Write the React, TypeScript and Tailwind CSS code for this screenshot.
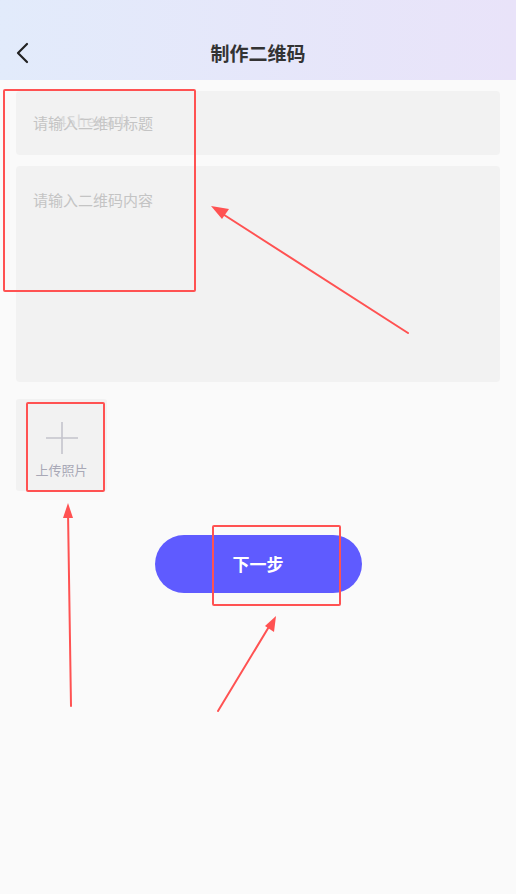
import React from "react";

export default function App() {
  const font = { fontFamily: '"Noto Sans CJK SC", "Noto Sans", sans-serif' };
  return (
    <div className="relative w-[516px] h-[894px] bg-[#fafafa] overflow-hidden" style={font}>
      {/* Header */}
      <div className="h-[80px] bg-gradient-to-r from-[#e2ebfb] to-[#e9e3f9] flex flex-col">
        <div className="mt-[33px] h-[40px] flex items-center relative">
          <svg className="ml-[14px]" width="16" height="24" viewBox="0 0 16 24" fill="none">
            <path d="M13 3 L4 12 L13 21" stroke="#222" strokeWidth="2.2" strokeLinecap="round" strokeLinejoin="round" />
          </svg>
          <div className="absolute left-0 right-0 text-center text-[19px] font-bold text-[#333] pointer-events-none">制作二维码</div>
        </div>
      </div>

      {/* Body */}
      <div className="px-4 pt-[11px] flex flex-col">
        <div className="relative h-[64px] bg-[#f2f2f2] rounded-[4px] flex items-center pl-[17px]">
          <span className="text-[15px] text-[#c4c4c4]">请输入二维码标题</span>
          <span className="absolute left-[42px] top-[19px] text-[15px] text-[#cfcfcf] opacity-70 tracking-[1px]">45heea中</span>
        </div>
        <div className="mt-[11px] h-[216px] bg-[#f2f2f2] rounded-[4px] pl-[17px] pt-[21px]">
          <span className="text-[15px] text-[#c4c4c4] leading-[22px]">请输入二维码内容</span>
        </div>
        <div className="mt-[17px] w-[91px] h-[92px] bg-[#f2f2f2] rounded-[3px] flex flex-col items-center pt-[23px]">
          <svg width="32" height="32" viewBox="0 0 32 32">
            <path d="M16 0 V32 M0 16 H32" stroke="#c4c4cc" strokeWidth="1.6" />
          </svg>
          <span className="mt-[8px] text-[13px] text-[#a8a8b6] leading-[16px]">上传照片</span>
        </div>
        <div className="mt-[44px] flex justify-center">
          <div className="w-[207px] h-[58px] rounded-full bg-[#5f5bff] flex items-center justify-center text-white text-[17px] font-bold">下一步</div>
        </div>
      </div>

      {/* Annotations */}
      <div className="absolute left-[3px] top-[89px] w-[193px] h-[203px] border-2 border-[#ff5252] rounded-[2px] pointer-events-none" />
      <div className="absolute left-[26px] top-[402px] w-[79px] h-[90px] border-2 border-[#ff5252] rounded-[2px] pointer-events-none" />
      <div className="absolute left-[212px] top-[525px] w-[129px] h-[81px] border-2 border-[#ff5252] rounded-[2px] pointer-events-none" />
      <svg className="absolute left-0 top-0 pointer-events-none" width="516" height="894" viewBox="0 0 516 894">
        <g stroke="#ff5252" strokeWidth="2" fill="#ff5252" strokeLinecap="round">
          <line x1="408" y1="333" x2="218" y2="211" />
          <polygon points="211,206 229,209 222,219" stroke="none" />
          <line x1="71" y1="706" x2="68" y2="512" />
          <polygon points="68,503 73,518 63,518" stroke="none" />
          <line x1="218" y1="711" x2="270" y2="625" />
          <polygon points="276,616 274,632 265,626" stroke="none" />
        </g>
      </svg>
    </div>
  );
}
